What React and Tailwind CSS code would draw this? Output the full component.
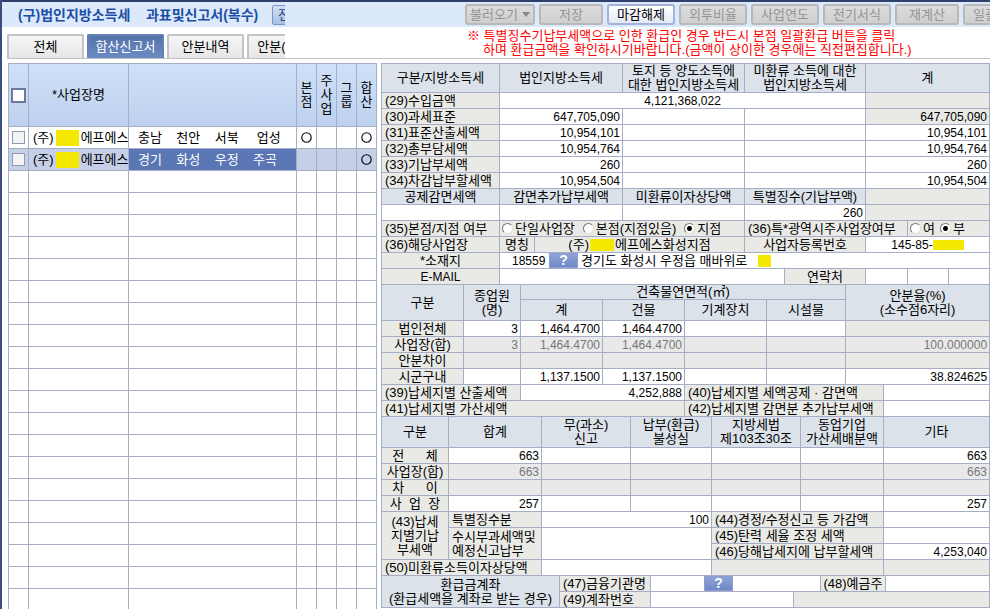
import React, { useState } from "react";

const toolbar = [
    { label: "불러오기", width: "w-[70px]", menu: true },
    { label: "저장", width: "w-16" },
    { label: "마감해제", width: "w-[68px]", enabled: true },
    { label: "외투비율", width: "w-[68px]" },
    { label: "사업연도", width: "w-[68px]" },
    { label: "전기서식", width: "w-[68px]" },
    { label: "재계산", width: "w-16" },
    { label: "일괄환급", width: "w-[68px]" },
];

const tabs = ["전체", "합산신고서", "안분내역", "안분(신고)"];

const sites = [
    { id: 1, address: "충남    천안    서북     업성", head: true, sum: true },
    { id: 2, address: "경기    화성    우정    주곡", head: false, sum: true },
];

const taxRows = [
    ["(30)과세표준", "647,705,090"],
    ["(31)표준산출세액", "10,954,101"],
    ["(32)총부담세액", "10,954,764"],
    ["(33)기납부세액", "260"],
    ["(34)차감납부할세액", "10,954,504"],
];

// shared cell looks
const base = "border border-[#a6aec6] p-0 font-normal whitespace-nowrap overflow-hidden";
const head = `${base} bg-[#dbe2e9] text-center`;
const label = `${base} bg-[#e9eae6] text-left pl-[3px]`;
const labelMid = `${base} bg-[#e9eae6] text-center`;
const gray = `${base} bg-[#e9eae6]`;
const off = `${base} bg-[#e9e9e9] text-[#777] text-right text-xs leading-[14px] pr-[2px]`;
const num = `${base} bg-white text-right text-xs leading-[14px] pr-[2px]`;
const white = `${base} bg-white`;
const sheet = "w-full table-fixed border-collapse -mt-px";

const Mask = ({ className }) => (
    <span className={`inline-block bg-[#f5e800] align-middle ${className}`}></span>
);

const Ring = () => (
    <svg className="mx-auto block size-[11px]" viewBox="0 0 11 11" role="img" aria-label="해당">
        <circle cx="5.5" cy="5.5" r="4.7" fill="none" stroke="#000" strokeWidth="1.1" />
    </svg>
);

const Radio = ({ name, text, checked }) => (
    <label className="inline-flex items-center gap-[2px]">
        <input
            type="radio"
            name={name}
            defaultChecked={checked}
            className="appearance-none size-[11px] shrink-0 rounded-full border border-t-[#777] border-l-[#777] border-r-[#ddd] border-b-[#ddd] bg-white checked:bg-[radial-gradient(circle,#000_2px,#fff_3px)]"
        />
        {text}
    </label>
);

const HelpButton = ({ title }) => (
    <button
        aria-label={title}
        className="h-[15px] w-[29px] shrink-0 border border-[#8d9fd0] bg-linear-to-b from-[#8fa3d6] to-[#6f88c5] text-sm leading-[13px] font-bold text-white"
    >
        ?
    </button>
);

const TopBar = () => (
    <div className="flex h-[27px] border-t-2 border-[#2f406c] bg-[#dce9fb]">
        <div className="flex w-[283px] shrink-0 items-center overflow-hidden pl-4">
            <h1 className="w-[254px] shrink-0 text-sm font-bold whitespace-pre text-[#1c4fa5]">
                (구)법인지방소득세    과표및신고서(복수)
            </h1>
            <button className="h-5 w-12 shrink-0 rounded-xs border border-[#7c95cc] bg-linear-to-b from-[#d3dff5] to-[#aac0e6] pl-[5px] text-left text-[#2a4a8c]">
                전체
            </button>
        </div>
        <div className="flex min-w-0 flex-1 items-center gap-1 overflow-hidden pl-[180px]">
            {toolbar.map((b) => (
                <button
                    key={b.label}
                    disabled={!b.enabled}
                    className={`flex h-[21px] shrink-0 items-center justify-center gap-1 rounded-[3px] border-2 whitespace-nowrap ${b.width} ${b.enabled
                            ? "border-[#a3b3da] bg-linear-to-b from-white to-[#e3e8f3] text-black"
                            : "border-[#b9b9b9] bg-linear-to-b from-[#dcdcdc] to-[#cfcfcf] text-[#949494]"
                        }`}
                >
                    {b.label}
                    {b.menu && (
                        <svg className="h-[5px] w-2" viewBox="0 0 8 5">
                            <path d="M0 0h8L4 5z" fill="#888" />
                        </svg>
                    )}
                </button>
            ))}
        </div>
    </div>
);

const TabBar = () => {
    const [active, setActive] = useState("합산신고서");

    return (
        <div className="ml-[5px] flex h-8 items-end border-b border-[#c0c0c0]">
            <div className="flex w-[278px] shrink-0 gap-[3px] overflow-hidden">
                {tabs.map((tab) => (
                    <button
                        key={tab}
                        onClick={() => setActive(tab)}
                        className={`h-6 min-w-[77px] shrink-0 rounded-t-xs border-2 border-b-0 px-px text-center whitespace-nowrap ${tab === active
                                ? "border-[#6480b8] bg-linear-to-b from-[#5472a8] to-[#6b8dc4] text-white"
                                : "border-[#c4c4c4] bg-linear-to-b from-[#f6f6f6] to-[#e6e6e6] text-black"
                            }`}
                    >
                        {tab}
                    </button>
                ))}
            </div>
            <div className="flex-1 self-start overflow-hidden pt-[2px] pl-[182px] leading-[14px] whitespace-nowrap text-[#f00]">
                <p>※ 특별징수기납부세액으로 인한 환급인 경우 반드시 본점 일괄환급 버튼을 클릭</p>
                <p className="pl-4">하며 환급금액을 확인하시기바랍니다.(금액이 상이한 경우에는 직접편집합니다.)</p>
            </div>
        </div>
    );
};

const SiteTable = () => {
    const cell = "border border-[#a6aec6] p-0";
    const flags = [["본", "점"], ["주", "사", "업"], ["그", "룹"], ["합", "산"]];

    return (
        <table className="w-[369px] shrink-0 table-fixed border-collapse">
            <colgroup>
                <col className="w-5" />
                <col className="w-[100px]" />
                <col className="w-[168px]" />
                <col className="w-5" />
                <col className="w-5" />
                <col className="w-5" />
                <col className="w-5" />
            </colgroup>
            <thead>
                <tr className="h-[63px] bg-linear-to-b from-[#cfe0f8] to-[#bdd1ee]">
                    <th className={cell}>
                        <input type="checkbox" aria-label="전체 선택" className="mx-auto block size-[15px] appearance-none border-2 border-[#6b7a9c] bg-white" />
                    </th>
                    <th className={`${cell} font-normal`}>*사업장명</th>
                    <th className={cell}></th>
                    {flags.map((chars) => (
                        <th key={chars.join("")} className={`${cell} font-normal`}>
                            {chars.map((c) => (
                                <span key={c} className="block">{c}</span>
                            ))}
                        </th>
                    ))}
                </tr>
            </thead>
            <tbody>
                {sites.map((site) => {
                    const selected = site.id === 2;
                    return (
                        <tr key={site.id} className={`h-[22px] ${selected ? "bg-[#c5cfe8]" : "bg-white"}`}>
                            <td className={cell}>
                                <input type="checkbox" aria-label={`사업장 ${site.id}`} className="mx-auto block size-[13px] appearance-none border border-[#8f9bb8] bg-[#f4f4f4]" />
                            </td>
                            <td className={`${cell} overflow-hidden pl-1`}>
                                <span className="flex items-center gap-[2px] whitespace-nowrap">
                                    (주)<Mask className="h-4 w-[23px] shrink-0" />에프에스
                                </span>
                            </td>
                            <td className={`${cell} pl-[9px] whitespace-pre ${selected ? "bg-[#5a76b4] text-white" : ""}`}>
                                {site.address}
                            </td>
                            <td className={cell}>{site.head && <Ring />}</td>
                            <td className={cell}></td>
                            <td className={cell}></td>
                            <td className={cell}>{site.sum && <Ring />}</td>
                        </tr>
                    );
                })}
                {Array.from({ length: 20 }).map((_, i) => (
                    <tr key={i} className="h-[22px] bg-white">
                        {Array.from({ length: 7 }).map((_, j) => (
                            <td key={j} className={cell}></td>
                        ))}
                    </tr>
                ))}
            </tbody>
        </table>
    );
};

const TaxTable = () => (
    <table className="w-full table-fixed border-collapse">
        <colgroup>
            <col className="w-[118px]" />
            <col className="w-[35px]" />
            <col className="w-[88px]" />
            <col className="w-[122px]" />
            <col className="w-10" />
            <col className="w-[81px]" />
            <col className="w-[42px]" />
            <col className="w-[41px]" />
            <col className="w-[41px]" />
        </colgroup>
        <tbody>
            <tr className="h-7">
                <th className={head}>구분/지방소득세</th>
                <th className={head} colSpan={2}>법인지방소득세</th>
                <th className={head}>토지 등 양도소득에<br />대한 법인지방소득세</th>
                <th className={head} colSpan={2}>미환류 소득에 대한<br />법인지방소득세</th>
                <th className={head} colSpan={3}>계</th>
            </tr>
            <tr className="h-4">
                <td className={label}>(29)수입금액</td>
                <td className={`${white} text-center text-xs leading-[14px]`} colSpan={5}>4,121,368,022</td>
                <td className={gray} colSpan={3}></td>
            </tr>
            {taxRows.map(([name, amount], i) => (
                <tr key={name} className="h-4">
                    <td className={label}>{name}</td>
                    <td className={num} colSpan={2}>{amount}</td>
                    <td className={white}></td>
                    <td className={white} colSpan={2}></td>
                    <td className={`${base} pr-[2px] text-right text-xs leading-[14px] ${i === 0 ? "bg-[#e9eae6]" : "bg-white"}`} colSpan={3}>{amount}</td>
                </tr>
            ))}
            <tr className="h-4">
                <th className={head}>공제감면세액</th>
                <th className={head} colSpan={2}>감면추가납부세액</th>
                <th className={head}>미환류이자상당액</th>
                <th className={head} colSpan={2}>특별징수(기납부액)</th>
                <td className={gray} colSpan={3}></td>
            </tr>
            <tr className="h-4">
                <td className={white}></td>
                <td className={white} colSpan={2}></td>
                <td className={white}></td>
                <td className={num} colSpan={2}>260</td>
                <td className={gray} colSpan={3}></td>
            </tr>
            <tr className="h-4">
                <td className={label}>(35)본점/지점 여부</td>
                <td className={gray} colSpan={3}>
                    <div className="flex gap-2 pl-[2px]">
                        <Radio name="office" text="단일사업장" />
                        <Radio name="office" text="본점(지점있음)" />
                        <Radio name="office" text="지점" checked />
                    </div>
                </td>
                <td className={label} colSpan={3}>(36)특*광역시주사업장여부</td>
                <td className={gray} colSpan={2}>
                    <div className="flex gap-[5px] pl-[2px]">
                        <Radio name="metro" text="여" />
                        <Radio name="metro" text="부" checked />
                    </div>
                </td>
            </tr>
            <tr className="h-4">
                <td className={label}>(36)해당사업장</td>
                <td className={labelMid}>명칭</td>
                <td className={labelMid} colSpan={2}>
                    <span className="flex items-center justify-center gap-px">
                        (주)<Mask className="h-3 w-6" />에프에스화성지점
                    </span>
                </td>
                <td className={labelMid} colSpan={2}>사업자등록번호</td>
                <td className={white} colSpan={3}>
                    <span className="flex items-center justify-center text-xs leading-[14px]">
                        145-85-<Mask className="h-[10px] w-[31px]" />
                    </span>
                </td>
            </tr>
            <tr className="h-4">
                <td className={labelMid}>*소재지</td>
                <td className={white} colSpan={8}>
                    <span className="flex items-center gap-[3px] pl-3">
                        <span className="w-[34px] text-xs leading-[14px]">18559</span>
                        <HelpButton title="주소 찾기" />
                        <span className="pr-2">경기도 화성시 우정읍 매바위로</span>
                        <Mask className="h-3 w-[13px]" />
                    </span>
                </td>
            </tr>
            <tr className="h-4">
                <td className={`${labelMid} text-xs leading-[14px]`}>E-MAIL</td>
                <td className={white} colSpan={4}></td>
                <td className={labelMid}>연락처</td>
                <td className={white}></td>
                <td className={white}></td>
                <td className={white}></td>
            </tr>
        </tbody>
    </table>
);

const AreaTable = () => (
    <table className={sheet}>
        <colgroup>
            <col className="w-[82px]" />
            <col className="w-[57px]" />
            <col className="w-[82px]" />
            <col className="w-[82px]" />
            <col className="w-[82px]" />
            <col className="w-[79px]" />
            <col className="w-[38px]" />
            <col className="w-[106px]" />
        </colgroup>
        <tbody>
            <tr className="h-[15px]">
                <th className={head} rowSpan={2}>구분</th>
                <th className={head} rowSpan={2}>종업원<br />(명)</th>
                <th className={head} colSpan={4}>건축물연면적(㎡)</th>
                <th className={head} colSpan={2} rowSpan={2}>안분율(%)<br />(소수점6자리)</th>
            </tr>
            <tr className="h-[21px]">
                <th className={head}>계</th>
                <th className={head}>건물</th>
                <th className={head}>기계장치</th>
                <th className={head}>시설물</th>
            </tr>
            <tr className="h-4">
                <td className={labelMid}>법인전체</td>
                <td className={num}>3</td>
                <td className={num}>1,464.4700</td>
                <td className={num}>1,464.4700</td>
                <td className={white}></td>
                <td className={white}></td>
                <td className={gray} colSpan={2}></td>
            </tr>
            <tr className="h-4">
                <td className={labelMid}>사업장(합)</td>
                <td className={off}>3</td>
                <td className={off}>1,464.4700</td>
                <td className={off}>1,464.4700</td>
                <td className={off}></td>
                <td className={off}></td>
                <td className={off} colSpan={2}>100.000000</td>
            </tr>
            <tr className="h-4">
                <td className={labelMid}>안분차이</td>
                <td className={off}></td>
                <td className={off}></td>
                <td className={off}></td>
                <td className={off}></td>
                <td className={off}></td>
                <td className={gray} colSpan={2}></td>
            </tr>
            <tr className="h-4">
                <td className={labelMid}>시군구내</td>
                <td className={num}></td>
                <td className={num}>1,137.1500</td>
                <td className={num}>1,137.1500</td>
                <td className={white}></td>
                <td className={white}></td>
                <td className={num} colSpan={2}>38.824625</td>
            </tr>
            <tr className="h-4">
                <td className={label} colSpan={2}>(39)납세지별 산출세액</td>
                <td className={num} colSpan={2}>4,252,888</td>
                <td className={label} colSpan={3}>(40)납세지별 세액공제 · 감면액</td>
                <td className={white}></td>
            </tr>
            <tr className="h-4">
                <td className={label} colSpan={4}>(41)납세지별 가산세액</td>
                <td className={label} colSpan={3}>(42)납세지별 감면분 추가납부세액</td>
                <td className={white}></td>
            </tr>
        </tbody>
    </table>
);

const penaltyRows = [
    { name: "전      체", amount: "663" },
    { name: "사업장(합)", amount: "663", disabled: true },
    { name: "차      이", amount: "", disabled: true },
    { name: "사  업  장", amount: "257" },
];

const PenaltyTable = () => (
    <table className={sheet}>
        <colgroup>
            <col className="w-[67px]" />
            <col className="w-[93px]" />
            <col className="w-[89px]" />
            <col className="w-[81px]" />
            <col className="w-[89px]" />
            <col className="w-[83px]" />
            <col className="w-[106px]" />
        </colgroup>
        <tbody>
            <tr className="h-[31px]">
                <th className={head}>구분</th>
                <th className={head}>합계</th>
                <th className={head}>무(과소)<br />신고</th>
                <th className={head}>납부(환급)<br />불성실</th>
                <th className={head}>지방세법<br />제103조30조</th>
                <th className={head}>동업기업<br />가산세배분액</th>
                <th className={head}>기타</th>
            </tr>
            {penaltyRows.map((row) => {
                const look = row.disabled ? off : num;
                return (
                    <tr key={row.name} className="h-4">
                        <td className={labelMid}>
                            <span className="whitespace-pre">{row.name}</span>
                        </td>
                        <td className={look}>{row.amount}</td>
                        <td className={look}></td>
                        <td className={look}></td>
                        <td className={look}></td>
                        <td className={look}></td>
                        <td className={look}>{row.amount}</td>
                    </tr>
                );
            })}
            <tr className="h-4">
                <td className={labelMid} rowSpan={3}>(43)납세<br />지별기납<br />부세액</td>
                <td className={label}>특별징수분</td>
                <td className={num} colSpan={2}>100</td>
                <td className={label} colSpan={2}>(44)경정/수정신고 등 가감액</td>
                <td className={white}></td>
            </tr>
            <tr className="h-4">
                <td className={label} rowSpan={2}>수시부과세액및<br />예정신고납부</td>
                <td className={white} colSpan={2} rowSpan={2}></td>
                <td className={label} colSpan={2}>(45)탄력 세율 조정 세액</td>
                <td className={white}></td>
            </tr>
            <tr className="h-4">
                <td className={label} colSpan={2}>(46)당해납세지에 납부할세액</td>
                <td className={num}>4,253,040</td>
            </tr>
            <tr className="h-4">
                <td className={label} colSpan={2}>(50)미환류소득이자상당액</td>
                <td className={white} colSpan={2}></td>
                <td className={gray} colSpan={2}></td>
                <td className={gray}></td>
            </tr>
        </tbody>
    </table>
);

const RefundTable = () => (
    <table className={sheet}>
        <colgroup>
            <col className="w-[178px]" />
            <col className="w-[91px]" />
            <col className="w-[143px]" />
            <col className="w-[27px]" />
            <col className="w-[65px]" />
            <col className="w-[104px]" />
        </colgroup>
        <tbody>
            <tr className="h-4">
                <th className={head} rowSpan={2}>환급금계좌<br />(환급세액을 계좌로 받는 경우)</th>
                <td className={label}>(47)금융기관명</td>
                <td className={white} colSpan={2}>
                    <span className="flex pl-[53px]">
                        <HelpButton title="금융기관 찾기" />
                    </span>
                </td>
                <td className={labelMid}>(48)예금주</td>
                <td className={white}></td>
            </tr>
            <tr className="h-4">
                <td className={label}>(49)계좌번호</td>
                <td className={white}></td>
                <td className={gray} colSpan={3}></td>
            </tr>
        </tbody>
    </table>
);

const App = () => {
    return (
        <div className="h-screen overflow-hidden border-l-2 border-[#3c4c7e] bg-white font-['Liberation_Sans','Noto_Sans_CJK_KR',sans-serif] text-[13px] leading-[14px] text-black">
            <TopBar />
            <TabBar />
            <main className="flex items-start gap-1 pt-1 pl-[6px]">
                <SiteTable />
                <div className="min-w-0 flex-1">
                    <TaxTable />
                    <AreaTable />
                    <PenaltyTable />
                    <RefundTable />
                </div>
            </main>
        </div>
    );
};

export default App;
